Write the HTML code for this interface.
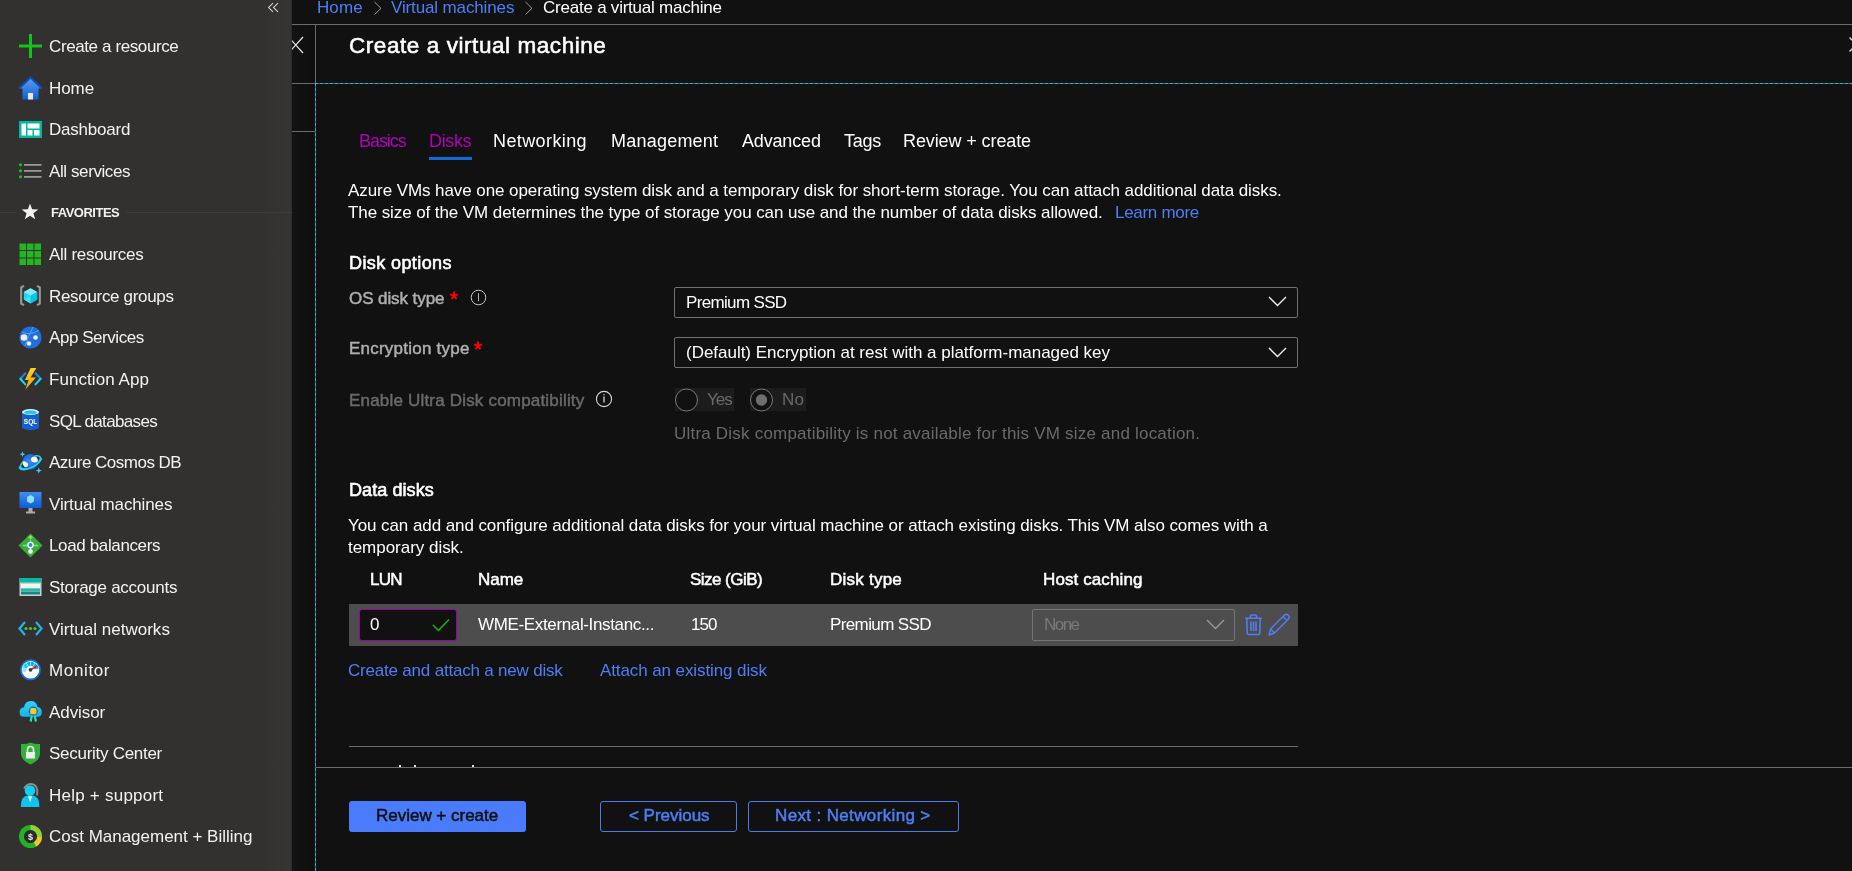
<!DOCTYPE html>
<html><head><meta charset="utf-8"><title>Create a virtual machine</title>
<style>
html,body{margin:0;padding:0;width:1852px;height:871px;overflow:hidden;background:#111111;}
body{position:relative;font-family:"Liberation Sans",sans-serif;}
.t{position:absolute;white-space:pre;line-height:1;will-change:transform;}
.a{position:absolute;}
</style></head><body>
<!-- sidebar -->
<div class="a" style="left:0;top:0;width:292px;height:871px;background:linear-gradient(90deg,#323130 0,#323130 262px,#363534 290px,#2a2a2a 292px);"></div>
<div class="a" style="left:0;top:212px;width:16px;height:1px;background:#3d3c3b;"></div>
<div class="a" style="left:126px;top:212px;width:166px;height:1px;background:#3d3c3b;"></div>
<svg class="a" style="left:266px;top:1px" width="16" height="14"><polyline points="7,2.2 2.5,6.5 7,10.8" fill="none" stroke="#d0d0d0" stroke-width="1.05"/><polyline points="12,2.2 7.5,6.5 12,10.8" fill="none" stroke="#d0d0d0" stroke-width="1.05"/></svg>
<!-- collapsed strip -->
<div class="a" style="left:292px;top:24px;width:23px;height:847px;background:linear-gradient(90deg,#131313,#0e0e0e);"></div>
<div class="a" style="left:292px;top:24px;width:1560px;height:1px;background:#6b6b6b;"></div>
<div class="a" style="left:315px;top:24px;width:1px;height:59px;background:#6b6b6b;"></div>
<div class="a" style="left:292px;top:83px;width:23px;height:1px;background:#6b6b6b;"></div>
<div class="a" style="left:292px;top:131px;width:23px;height:1px;background:#6b6b6b;"></div>
<svg class="a" style="left:1847.5px;top:36px" width="18" height="18"><path d="M1.5,1.5 L15.5,15.5 M15.5,1.5 L1.5,15.5" stroke="#e0e0e0" stroke-width="1.3"/></svg>
<svg class="a" style="left:292px;top:36px" width="13" height="18"><path d="M-3.5,1 L11,17 M11,1 L-3.5,17" stroke="#e0e0e0" stroke-width="1.3"/></svg>
<!-- dashed focus outline -->
<div class="a" style="left:315px;top:83px;width:1537px;height:1px;background:repeating-linear-gradient(90deg,#10b8f0 0 3px,#5e5856 3px 5px);"></div>
<div class="a" style="left:315px;top:83px;width:1px;height:788px;background:repeating-linear-gradient(180deg,#10b8f0 0 3px,#5e5856 3px 5px);"></div>
<!-- breadcrumb chevrons -->
<svg class="a" style="left:372.5px;top:1px" width="12" height="14"><polyline points="1.5,1 8,7.3 1.5,13.5" fill="none" stroke="#a0a0a0" stroke-width="0.95"/></svg>
<svg class="a" style="left:524px;top:1px" width="12" height="14"><polyline points="1.5,1 8,7.3 1.5,13.5" fill="none" stroke="#a0a0a0" stroke-width="0.95"/></svg>
<!-- tab underline -->
<div class="a" style="left:429px;top:157px;width:43px;height:3px;background:#0f6cd6;"></div>
<!-- required asterisks -->
<svg class="a" style="left:449px;top:291px" width="10" height="10"><path d="M5,4.6 V0.4 M5,4.6 L1,3.3 M5,4.6 L9,3.3 M5,4.6 L2.5,8.2 M5,4.6 L7.5,8.2" stroke="#f00" stroke-width="1.9" stroke-linecap="butt"/></svg>
<svg class="a" style="left:473px;top:341px" width="10" height="10"><path d="M5,4.6 V0.4 M5,4.6 L1,3.3 M5,4.6 L9,3.3 M5,4.6 L2.5,8.2 M5,4.6 L7.5,8.2" stroke="#f00" stroke-width="1.9" stroke-linecap="butt"/></svg>
<!-- info icons -->
<svg class="a" style="left:470px;top:288.5px" width="17" height="17"><circle cx="8.5" cy="8.5" r="7.3" fill="none" stroke="#c8c8c8" stroke-width="1"/><path d="M8.5,4.2 V12.3" stroke="#c8c8c8" stroke-width="0.9"/></svg>
<svg class="a" style="left:595px;top:390px" width="18" height="18"><circle cx="9" cy="9" r="7.6" fill="none" stroke="#d8d8d8" stroke-width="1.1"/><path d="M9,6.5 V12.5" stroke="#d8d8d8" stroke-width="1.3"/><circle cx="9" cy="4.8" r="0.7" fill="#d8d8d8"/></svg>
<!-- dropdowns -->
<div class="a" style="left:674px;top:287px;width:622px;height:29px;border:1px solid #707070;border-radius:2px;"></div>
<svg class="a" style="left:1267px;top:295px" width="21" height="13"><polyline points="2,2 10.5,10.5 19,2" fill="none" stroke="#f0f0f0" stroke-width="1.4"/></svg>
<div class="a" style="left:674px;top:337px;width:622px;height:29px;border:1px solid #707070;border-radius:2px;"></div>
<svg class="a" style="left:1267px;top:346px" width="21" height="13"><polyline points="2,2 10.5,10.5 19,2" fill="none" stroke="#f0f0f0" stroke-width="1.4"/></svg>
<!-- radios -->
<div class="a" style="left:675px;top:388px;width:59px;height:23px;background:#1c1c1c;"></div>
<div class="a" style="left:750px;top:388px;width:56px;height:23px;background:#1c1c1c;"></div>
<svg class="a" style="left:674px;top:387px" width="26" height="26"><circle cx="12.5" cy="13" r="11" fill="#111" stroke="#7a7a7a" stroke-width="1"/></svg>
<svg class="a" style="left:749px;top:387px" width="26" height="26"><circle cx="12.5" cy="13" r="11" fill="#111" stroke="#7a7a7a" stroke-width="1"/><circle cx="12.5" cy="13" r="5.7" fill="#6e6e6e"/></svg>
<!-- data disk row -->
<div class="a" style="left:349px;top:604px;width:949px;height:42px;background:#4d4d4d;"></div>
<div class="a" style="left:359px;top:609px;width:96px;height:30px;box-sizing:content-box;border:1.5px solid #a000a8;border-radius:3px;background:#111;"></div>
<svg class="a" style="left:430px;top:616px" width="22" height="18"><polyline points="3,9 8.5,14.5 19,3.5" fill="none" stroke="#16b816" stroke-width="1.5"/></svg>
<div class="a" style="left:1032px;top:609px;width:201px;height:30px;border:1px solid #767676;border-radius:2px;"></div>
<svg class="a" style="left:1205px;top:618px" width="21" height="13"><polyline points="2,2 10.5,10.5 19,2" fill="none" stroke="#9a9a9a" stroke-width="1.3"/></svg>
<svg class="a" style="left:1244px;top:614px" width="20" height="22"><path d="M1,4.2 H18 M6.5,4 V1.8 Q6.5,1 7.5,1 H11.5 Q12.5,1 12.5,1.8 V4 M2.8,4.5 L3.2,19 Q3.3,20.5 4.8,20.5 H14.2 Q15.7,20.5 15.8,19 L16.2,4.5 M7,7.5 V17 M9.5,7.5 V17 M12,7.5 V17" fill="none" stroke="#4f7df5" stroke-width="1.6"/></svg>
<svg class="a" style="left:1267px;top:613px" width="25" height="24"><path d="M2,22 L3.5,16 L17.5,2 Q19.5,0.5 21.5,2.5 Q23,4.5 21.5,6 L7.5,20 Z M3.5,16 L7.5,20 M16,3.5 L20,7.5" fill="none" stroke="#4f7df5" stroke-width="1.5" stroke-linejoin="round"/></svg>
<!-- lines -->
<div class="a" style="left:349px;top:746px;width:949px;height:1px;background:#6b6b6b;"></div>
<div class="a" style="left:399px;top:765px;width:2px;height:2px;background:#ddd;"></div>
<div class="a" style="left:414px;top:765px;width:2px;height:2px;background:#ddd;"></div>
<div class="a" style="left:472px;top:765px;width:2px;height:2px;background:#ddd;"></div>
<div class="a" style="left:316px;top:767px;width:1536px;height:1px;background:#6b6b6b;"></div>
<!-- footer buttons -->
<div class="a" style="left:349px;top:801px;width:177px;height:31px;background:#497bfa;border-radius:3px;"></div>
<div class="a" style="left:600px;top:801px;width:135px;height:29px;border:1px solid #4a7cf0;border-radius:3px;"></div>
<div class="a" style="left:748px;top:801px;width:209px;height:29px;border:1px solid #4a7cf0;border-radius:3px;"></div>

<!-- create a resource: plus -->
<svg class="a" style="left:18px;top:33px" width="26" height="26"><path d="M12.5,1 V25 M1,13 H24" stroke="#13c21a" stroke-width="3"/></svg>
<!-- home -->
<svg class="a" style="left:18px;top:76px" width="25" height="25">
<defs><linearGradient id="hg" x1="0" y1="0" x2="0" y2="1"><stop offset="0" stop-color="#5ea0ef"/><stop offset="1" stop-color="#0f5fd8"/></linearGradient></defs>
<path d="M12.5,1.5 L1,12.5 H4.5 V23.5 H20.5 V12.5 H24 Z" fill="url(#hg)"/>
<path d="M1,12.5 L12.5,1.5 L24,12.5" fill="none" stroke="#0b4fb8" stroke-width="2"/>
<rect x="10" y="17" width="5" height="6.5" fill="#e8e8e8"/></svg>
<!-- dashboard -->
<svg class="a" style="left:19px;top:121px" width="23" height="17"><rect width="23" height="17" fill="#00b8a4"/><rect x="2.5" y="2.5" width="4.5" height="12" fill="#fff"/><rect x="8.5" y="2.5" width="12" height="5" fill="#fff"/><rect x="8.5" y="9" width="5" height="5.5" fill="#fff"/><rect x="15" y="9" width="5.5" height="5.5" fill="#fff"/></svg>
<!-- all services -->
<svg class="a" style="left:18px;top:162px" width="25" height="19"><circle cx="2.5" cy="2.8" r="1.6" fill="#16c11c"/><circle cx="2.5" cy="8.8" r="1.6" fill="#16c11c"/><circle cx="2.5" cy="14.8" r="1.6" fill="#16c11c"/><path d="M6,2.8 H23.5 M6,8.8 H23.5 M6,14.8 H23.5" stroke="#9a9a9a" stroke-width="1.7"/></svg>
<!-- star -->
<svg class="a" style="left:21px;top:203px" width="18" height="17"><path d="M9,0.5 L11.1,6.3 L17.3,6.4 L12.4,10.3 L14.2,16.3 L9,12.8 L3.8,16.3 L5.6,10.3 L0.7,6.4 L6.9,6.3 Z" fill="#f2f2f2"/></svg>
<!-- all resources -->
<svg class="a" style="left:19px;top:243px" width="23" height="23"><g fill="#22b722"><rect x="0.5" y="0.5" width="6.5" height="6.5"/><rect x="8" y="0.5" width="6.5" height="6.5"/><rect x="15.5" y="0.5" width="6.5" height="6.5"/><rect x="0.5" y="8" width="6.5" height="6.5"/><rect x="8" y="8" width="6.5" height="6.5"/><rect x="15.5" y="8" width="6.5" height="6.5"/><rect x="0.5" y="15.5" width="6.5" height="6.5"/><rect x="8" y="15.5" width="6.5" height="6.5"/><rect x="15.5" y="15.5" width="6.5" height="6.5"/></g></svg>
<!-- resource groups -->
<svg class="a" style="left:19px;top:284px" width="23" height="23"><path d="M5,1.8 L2.2,3.4 V19.6 L5,21.2 M18,1.8 L20.8,3.4 V19.6 L18,21.2" fill="none" stroke="#989898" stroke-width="2.1"/><path d="M11.5,4.2 L18.2,8 V15.6 L11.5,19.4 L4.8,15.6 V8 Z" fill="#1ad8f4"/><path d="M4.8,8 L11.5,11.8 L18.2,8 L11.5,4.2 Z" fill="#80ecfb"/><path d="M11.5,11.8 V19.4 L18.2,15.6 V8 Z" fill="#05c6e6"/><path d="M4.8,15.6 L11.5,11.8 L11.5,19.4 Z" fill="#5fe3f7" opacity="0.6"/></svg>
<!-- app services -->
<svg class="a" style="left:19px;top:326px" width="23" height="23"><circle cx="11.5" cy="11.5" r="11" fill="#1f6fdc"/><path d="M3,6 Q11,10 20,4 M6,20 Q9,11 14,1" fill="none" stroke="#5d9df2" stroke-width="1"/><circle cx="5" cy="11.5" r="3.3" fill="#eee"/><circle cx="16.5" cy="11.5" r="2.3" fill="#eee"/><circle cx="10" cy="17.5" r="2.3" fill="#eee"/></svg>
<!-- function app -->
<svg class="a" style="left:18px;top:367px" width="26" height="24"><defs><linearGradient id="fg" x1="0" y1="0" x2="0" y2="1"><stop offset="0" stop-color="#fdd51c"/><stop offset="1" stop-color="#f49c0b"/></linearGradient></defs>
<path d="M7.3,6.3 L2.4,11.8 M17.5,6.3 L22.6,11.8" stroke="#1b84e3" stroke-width="2.1" stroke-linecap="round"/>
<path d="M2.4,11.8 L7.3,17.4 M22.6,11.8 L17.5,17.4" stroke="#08def6" stroke-width="2.1" stroke-linecap="round"/>
<path d="M12.6,0.9 L18.3,0.9 L12.6,10.4 L17.9,10.4 L7.3,22.7 L10.6,13.1 L6.9,13.1 Z" fill="url(#fg)"/></svg>
<!-- sql -->
<svg class="a" style="left:21px;top:408px;will-change:transform" width="19" height="24"><path d="M1,4 V20 Q9.5,24.5 18,20 V4 Z" fill="#1560cf"/><ellipse cx="9.5" cy="4" rx="8.5" ry="3" fill="#e0f6ff"/><ellipse cx="9.5" cy="4.3" rx="6.5" ry="2" fill="#2cc3ef"/><text x="9.5" y="16" text-anchor="middle" font-family="Liberation Sans" font-weight="700" font-size="6.5" fill="#fff">SQL</text></svg>
<!-- cosmos -->
<svg class="a" style="left:18px;top:450px" width="25" height="25"><defs><radialGradient id="cg" cx="0.45" cy="0.5" r="0.6"><stop offset="0" stop-color="#3d8cf0"/><stop offset="1" stop-color="#0f5fd6"/></radialGradient><clipPath id="cc"><circle cx="12.3" cy="11.8" r="7.8"/></clipPath></defs>
<ellipse cx="12.5" cy="12.3" rx="11" ry="4.6" transform="rotate(-28 12.5 12.3)" fill="none" stroke="#22d3f5" stroke-width="1.5"/>
<circle cx="12.3" cy="11.8" r="7.8" fill="url(#cg)"/>
<g clip-path="url(#cc)"><path d="M4,11.5 Q7,10.5 8.5,12.5 Q10.5,13 10,15.5 Q9.5,17.5 6,17 Q3.5,15 4,11.5 Z M13,8.5 Q14.5,6 17,6.5 Q19.5,6.5 20,9.5 Q20,12.5 17.5,12.5 Q14,13 13,10.5 Z" fill="#f4f4f4"/></g>
<path d="M1.5,16.5 A11,4.6 -28 0 0 23.5,8.1" fill="none" stroke="#22d3f5" stroke-width="1.6" transform=""/>
<path d="M4.5,1.3 L5.4,3.4 L7.5,4.2 L5.4,5 L4.5,7.1 L3.6,5 L1.5,4.2 L3.6,3.4 Z M20.8,17.8 L21.7,19.8 L23.8,20.6 L21.7,21.4 L20.8,23.5 L19.9,21.4 L17.8,20.6 L19.9,19.8 Z" fill="#22d3f5"/></svg>
<!-- virtual machines -->
<svg class="a" style="left:19px;top:491px" width="23" height="24"><defs><linearGradient id="vmg" x1="0" y1="0" x2="0" y2="1"><stop offset="0" stop-color="#3f8ef0"/><stop offset="1" stop-color="#0d5cd6"/></linearGradient></defs><rect x="0.5" y="1" width="22" height="16" fill="url(#vmg)"/><path d="M11.5,4 L15,6 V10.5 L11.5,12.5 L8,10.5 V6 Z" fill="#8ee0f8"/><path d="M9.5,17 H13.5 V20.5 H16 V22.5 H7 V20.5 H9.5 Z" fill="#aaa"/></svg>
<!-- load balancer -->
<svg class="a" style="left:18px;top:533px" width="25" height="25"><path d="M12.5,0.5 L24.5,12.5 L12.5,24.5 L0.5,12.5 Z" fill="#34b03a"/><path d="M12.5,3 V9 M5,12.5 H9 M16,12.5 H20 M10.5,5 L12.5,3 L14.5,5" fill="none" stroke="#8ce06b" stroke-width="1.3"/><path d="M12.5,13 V17" stroke="#fff" stroke-width="1.6"/><circle cx="12.5" cy="12" r="3.3" fill="#fff"/><circle cx="12.5" cy="12" r="2" fill="#3f7ee8"/><circle cx="12.5" cy="18.5" r="2.3" fill="#fff"/></svg>
<!-- storage -->
<svg class="a" style="left:19px;top:577px" width="23" height="20"><rect x="0.5" y="1" width="22" height="18" fill="#cfcfcf"/><rect x="0.5" y="1" width="22" height="4.5" fill="#00b8a4"/><rect x="2" y="7" width="19" height="4" fill="#f4f4f4"/><rect x="2" y="11.5" width="19" height="2.5" fill="#1cbfa8"/><rect x="2" y="14.5" width="19" height="3" fill="#0f8a7c"/></svg>
<!-- virtual networks -->
<svg class="a" style="left:18px;top:621px" width="25" height="16"><path d="M7,1 L1.5,7.5 L7,14 M18,1 L23.5,7.5 L18,14" fill="none" stroke="#1fb6e8" stroke-width="2.2"/><circle cx="8" cy="7.5" r="1.6" fill="#43c936"/><circle cx="12.5" cy="7.5" r="1.6" fill="#43c936"/><circle cx="17" cy="7.5" r="1.6" fill="#43c936"/></svg>
<!-- monitor -->
<svg class="a" style="left:19px;top:658px" width="23" height="24"><circle cx="11.5" cy="11.8" r="9.6" fill="#fff" stroke="#1a6fdc" stroke-width="1.7"/><path d="M3.89,14.57 A8.1,8.1 0 0 1 3.64,9.84 L7.62,10.83 A4.0,4.0 0 0 0 7.74,13.17 Z" fill="#8fe6f8"/><path d="M3.84,9.16 A8.1,8.1 0 0 1 6.97,5.08 L9.26,8.48 A4.0,4.0 0 0 0 7.72,10.50 Z" fill="#12d3f2"/><path d="M7.57,4.72 A8.1,8.1 0 0 1 11.22,3.70 L11.36,7.80 A4.0,4.0 0 0 0 9.56,8.30 Z" fill="#05b6d4"/><path d="M11.78,3.70 A8.1,8.1 0 0 1 15.79,4.93 L13.62,8.41 A4.0,4.0 0 0 0 11.64,7.80 Z" fill="#05b6d4"/><path d="M16.37,5.33 A8.1,8.1 0 0 1 19.52,10.67 L15.46,11.24 A4.0,4.0 0 0 0 13.91,8.61 Z" fill="#05b6d4"/><path d="M11.5,11.8 L17.74,8.20" stroke="#e8194a" stroke-width="1.6" stroke-linecap="round"/><circle cx="11.5" cy="11.8" r="1.9" fill="#3c3c3c"/></svg>
<!-- advisor -->
<svg class="a" style="left:19px;top:700px" width="24" height="24"><defs><linearGradient id="ag" x1="0" y1="0" x2="0" y2="1"><stop offset="0" stop-color="#2fd3f7"/><stop offset="1" stop-color="#12b5e4"/></linearGradient></defs>
<path d="M4.5,16.7 Q0.6,16.7 0.6,12.2 Q0.6,7.8 5,7.2 Q6,1 12,1 Q17.5,1 18.5,6.8 Q22.8,7.6 22.8,12.2 Q22.8,16.7 18.5,16.7 Z" fill="url(#ag)"/>
<path d="M12.2,14.5 L10.5,20.8 L12.6,22.2 L14,15.5 Z M16.4,14.5 L18,20.8 L16,22.2 L14.6,15.5 Z" fill="#1fe3c0"/>
<circle cx="14.3" cy="11.2" r="4.6" fill="#1b63cf"/>
<rect x="11.2" y="8.1" width="6.2" height="6.2" rx="1.6" fill="#fbc91a"/></svg>
<!-- security center -->
<svg class="a" style="left:20px;top:742px" width="21" height="23"><path d="M10.5,0.5 Q15,2.5 20,2 V12 Q19.5,18.5 10.5,22.5 Q1.5,18.5 1,12 V2 Q6,2.5 10.5,0.5 Z" fill="#31b13a"/><path d="M7.5,10 V7.5 Q7.5,4.5 10.5,4.5 Q13.5,4.5 13.5,7.5 V10" fill="none" stroke="#eee" stroke-width="1.6"/><rect x="6" y="10" width="9" height="6.5" fill="#eee"/></svg>
<!-- help + support -->
<svg class="a" style="left:20px;top:782px" width="22" height="26"><path d="M4,6.4 Q7,1.6 11.5,2 Q16.5,2.6 17.3,8.3 L17.1,13.5" fill="none" stroke="#8c8c8c" stroke-width="1.9"/>
<path d="M0.9,25 Q0.6,14.5 7.5,13.6 L12.8,13.6 Q19.6,14.5 19.4,25 Z" fill="#0fc3ec"/>
<circle cx="10" cy="8.6" r="5.3" fill="#0fd0f2"/>
<path d="M8,14.2 L12.3,14.2 L10.1,20.3 Z" fill="#cdf4fb"/></svg>
<!-- cost management -->
<svg class="a" style="left:18px;top:824px;will-change:transform" width="25" height="25"><circle cx="12.5" cy="12.5" r="9" fill="none" stroke="#21b321" stroke-width="5"/><path d="M12.5,3.5 A9,9 0 0 1 21.5,12.5" fill="none" stroke="#8fd13d" stroke-width="5"/><path d="M21.5,12.5 A9,9 0 0 1 17,20.3" fill="none" stroke="#f5c524" stroke-width="5"/><circle cx="12.5" cy="12.5" r="6.3" fill="#2b2b2b"/><text x="12.5" y="15.8" text-anchor="middle" font-family="Liberation Sans" font-weight="700" font-size="9" fill="#eee">$</text></svg>

<div class="t" style="left:49.3px;top:37.9px;font-size:17px;font-weight:400;color:#f3f2f1;letter-spacing:-0.392px;">Create a resource</div>
<div class="t" style="left:49.3px;top:79.9px;font-size:17px;font-weight:400;color:#f3f2f1;letter-spacing:-0.086px;">Home</div>
<div class="t" style="left:49.3px;top:120.9px;font-size:17px;font-weight:400;color:#f3f2f1;letter-spacing:-0.209px;">Dashboard</div>
<div class="t" style="left:49.3px;top:162.9px;font-size:17px;font-weight:400;color:#f3f2f1;letter-spacing:-0.406px;">All services</div>
<div class="t" style="left:49.3px;top:245.9px;font-size:17px;font-weight:400;color:#f3f2f1;letter-spacing:-0.297px;">All resources</div>
<div class="t" style="left:49.3px;top:287.9px;font-size:17px;font-weight:400;color:#f3f2f1;letter-spacing:-0.319px;">Resource groups</div>
<div class="t" style="left:49.3px;top:328.9px;font-size:17px;font-weight:400;color:#f3f2f1;letter-spacing:-0.452px;">App Services</div>
<div class="t" style="left:49.3px;top:370.9px;font-size:17px;font-weight:400;color:#f3f2f1;letter-spacing:0.059px;">Function App</div>
<div class="t" style="left:49.3px;top:412.9px;font-size:17px;font-weight:400;color:#f3f2f1;letter-spacing:-0.655px;">SQL databases</div>
<div class="t" style="left:49.3px;top:453.9px;font-size:17px;font-weight:400;color:#f3f2f1;letter-spacing:-0.509px;">Azure Cosmos DB</div>
<div class="t" style="left:49.3px;top:495.9px;font-size:17px;font-weight:400;color:#f3f2f1;letter-spacing:-0.131px;">Virtual machines</div>
<div class="t" style="left:49.3px;top:536.9px;font-size:17px;font-weight:400;color:#f3f2f1;letter-spacing:-0.367px;">Load balancers</div>
<div class="t" style="left:49.3px;top:578.9px;font-size:17px;font-weight:400;color:#f3f2f1;letter-spacing:-0.261px;">Storage accounts</div>
<div class="t" style="left:49.3px;top:620.9px;font-size:17px;font-weight:400;color:#f3f2f1;letter-spacing:0.017px;">Virtual networks</div>
<div class="t" style="left:49.3px;top:661.9px;font-size:17px;font-weight:400;color:#f3f2f1;letter-spacing:0.635px;">Monitor</div>
<div class="t" style="left:49.3px;top:703.9px;font-size:17px;font-weight:400;color:#f3f2f1;letter-spacing:-0.081px;">Advisor</div>
<div class="t" style="left:49.3px;top:744.9px;font-size:17px;font-weight:400;color:#f3f2f1;letter-spacing:-0.277px;">Security Center</div>
<div class="t" style="left:49.3px;top:786.9px;font-size:17px;font-weight:400;color:#f3f2f1;letter-spacing:0.235px;">Help + support</div>
<div class="t" style="left:49.3px;top:827.9px;font-size:17px;font-weight:400;color:#f3f2f1;letter-spacing:-0.010px;">Cost Management + Billing</div>
<div class="t" style="left:50.7px;top:206.3px;font-size:13px;font-weight:700;color:#f3f2f1;letter-spacing:-0.490px;">FAVORITES</div>
<div class="t" style="left:317.2px;top:-1.1px;font-size:17px;font-weight:400;color:#4d7ff5;letter-spacing:0.080px;">Home</div>
<div class="t" style="left:390.8px;top:-1.1px;font-size:17px;font-weight:400;color:#4d7ff5;letter-spacing:-0.131px;">Virtual machines</div>
<div class="t" style="left:542.8px;top:-1.1px;font-size:17px;font-weight:400;color:#ffffff;letter-spacing:-0.229px;">Create a virtual machine</div>
<div class="t" style="left:348.6px;top:35.3px;font-size:22.5px;font-weight:400;color:#ffffff;letter-spacing:0.566px;-webkit-text-stroke:0.55px #ffffff;">Create a virtual machine</div>
<div class="t" style="left:359.2px;top:132.1px;font-size:18px;font-weight:400;color:#b000b8;letter-spacing:-1.063px;">Basics</div>
<div class="t" style="left:429.4px;top:132.1px;font-size:18px;font-weight:400;color:#b000b8;letter-spacing:-0.350px;">Disks</div>
<div class="t" style="left:493.1px;top:132.1px;font-size:18px;font-weight:400;color:#ffffff;letter-spacing:0.395px;">Networking</div>
<div class="t" style="left:611.1px;top:132.1px;font-size:18px;font-weight:400;color:#ffffff;letter-spacing:0.225px;">Management</div>
<div class="t" style="left:741.8px;top:132.1px;font-size:18px;font-weight:400;color:#ffffff;letter-spacing:-0.166px;">Advanced</div>
<div class="t" style="left:844.4px;top:132.1px;font-size:18px;font-weight:400;color:#ffffff;letter-spacing:-0.244px;">Tags</div>
<div class="t" style="left:903.3px;top:132.1px;font-size:18px;font-weight:400;color:#ffffff;letter-spacing:-0.104px;">Review + create</div>
<div class="t" style="left:348.4px;top:181.9px;font-size:17px;font-weight:400;color:#ffffff;letter-spacing:-0.076px;">Azure VMs have one operating system disk and a temporary disk for short-term storage. You can attach additional data disks.</div>
<div class="t" style="left:348.4px;top:203.9px;font-size:17px;font-weight:400;color:#ffffff;letter-spacing:-0.089px;">The size of the VM determines the type of storage you can use and the number of data disks allowed.</div>
<div class="t" style="left:1115.0px;top:203.9px;font-size:17px;font-weight:400;color:#4d7ff5;letter-spacing:-0.304px;">Learn more</div>
<div class="t" style="left:348.7px;top:254.1px;font-size:18px;font-weight:400;color:#ffffff;letter-spacing:0.405px;-webkit-text-stroke:0.6px #ffffff;">Disk options</div>
<div class="t" style="left:348.7px;top:289.9px;font-size:17px;font-weight:400;color:#b0b0b0;letter-spacing:-0.080px;-webkit-text-stroke:0.45px #b0b0b0;">OS disk type</div>
<div class="t" style="left:348.6px;top:339.9px;font-size:17px;font-weight:400;color:#b0b0b0;letter-spacing:0.229px;-webkit-text-stroke:0.45px #b0b0b0;">Encryption type</div>
<div class="t" style="left:348.6px;top:391.9px;font-size:17px;font-weight:400;color:#6a6a6a;letter-spacing:0.190px;-webkit-text-stroke:0.45px #6a6a6a;">Enable Ultra Disk compatibility</div>
<div class="t" style="left:685.5px;top:293.9px;font-size:17px;font-weight:400;color:#ffffff;letter-spacing:-0.659px;">Premium SSD</div>
<div class="t" style="left:685.5px;top:343.9px;font-size:17px;font-weight:400;color:#ffffff;letter-spacing:-0.022px;">(Default) Encryption at rest with a platform-managed key</div>
<div class="t" style="left:707.2px;top:390.9px;font-size:17px;font-weight:400;color:#6a6a6a;letter-spacing:-0.967px;">Yes</div>
<div class="t" style="left:782.2px;top:390.9px;font-size:17px;font-weight:400;color:#6a6a6a;letter-spacing:0.266px;">No</div>
<div class="t" style="left:673.7px;top:424.9px;font-size:17px;font-weight:400;color:#6a6a6a;letter-spacing:0.209px;">Ultra Disk compatibility is not available for this VM size and location.</div>
<div class="t" style="left:348.7px;top:481.1px;font-size:18px;font-weight:400;color:#ffffff;letter-spacing:0.084px;-webkit-text-stroke:0.6px #ffffff;">Data disks</div>
<div class="t" style="left:348.4px;top:516.9px;font-size:17px;font-weight:400;color:#ffffff;letter-spacing:-0.082px;">You can add and configure additional data disks for your virtual machine or attach existing disks. This VM also comes with a</div>
<div class="t" style="left:348.4px;top:538.9px;font-size:17px;font-weight:400;color:#ffffff;letter-spacing:-0.029px;">temporary disk.</div>
<div class="t" style="left:369.5px;top:570.9px;font-size:17px;font-weight:400;color:#ffffff;letter-spacing:-0.758px;-webkit-text-stroke:0.5px #ffffff;">LUN</div>
<div class="t" style="left:477.6px;top:570.9px;font-size:17px;font-weight:400;color:#ffffff;letter-spacing:-0.053px;-webkit-text-stroke:0.5px #ffffff;">Name</div>
<div class="t" style="left:690.0px;top:570.9px;font-size:17px;font-weight:400;color:#ffffff;letter-spacing:-0.541px;-webkit-text-stroke:0.5px #ffffff;">Size (GiB)</div>
<div class="t" style="left:830.4px;top:570.9px;font-size:17px;font-weight:400;color:#ffffff;letter-spacing:0.235px;-webkit-text-stroke:0.5px #ffffff;">Disk type</div>
<div class="t" style="left:1042.6px;top:570.9px;font-size:17px;font-weight:400;color:#ffffff;letter-spacing:0.102px;-webkit-text-stroke:0.5px #ffffff;">Host caching</div>
<div class="t" style="left:370.0px;top:615.9px;font-size:17px;font-weight:400;color:#ffffff;letter-spacing:0.131px;">0</div>
<div class="t" style="left:477.6px;top:615.9px;font-size:17px;font-weight:400;color:#ffffff;letter-spacing:-0.355px;">WME-External-Instanc...</div>
<div class="t" style="left:690.8px;top:615.9px;font-size:17px;font-weight:400;color:#ffffff;letter-spacing:-0.988px;">150</div>
<div class="t" style="left:830.4px;top:615.9px;font-size:17px;font-weight:400;color:#ffffff;letter-spacing:-0.619px;">Premium SSD</div>
<div class="t" style="left:1044.2px;top:615.9px;font-size:17px;font-weight:400;color:#7a7a7a;letter-spacing:-1.547px;">None</div>
<div class="t" style="left:348.1px;top:661.9px;font-size:17px;font-weight:400;color:#4d7ff5;letter-spacing:-0.200px;">Create and attach a new disk</div>
<div class="t" style="left:600.0px;top:661.9px;font-size:17px;font-weight:400;color:#4d7ff5;letter-spacing:-0.098px;">Attach an existing disk</div>
<div class="t" style="left:375.9px;top:806.9px;font-size:17px;font-weight:400;color:#111111;letter-spacing:-0.013px;-webkit-text-stroke:0.5px #111111;">Review + create</div>
<div class="t" style="left:628.6px;top:806.9px;font-size:17px;font-weight:400;color:#4d7ff5;letter-spacing:-0.022px;-webkit-text-stroke:0.5px #4d7ff5;">&lt; Previous</div>
<div class="t" style="left:774.9px;top:806.9px;font-size:17px;font-weight:400;color:#4d7ff5;letter-spacing:0.360px;-webkit-text-stroke:0.5px #4d7ff5;">Next : Networking &gt;</div>
</body></html>
